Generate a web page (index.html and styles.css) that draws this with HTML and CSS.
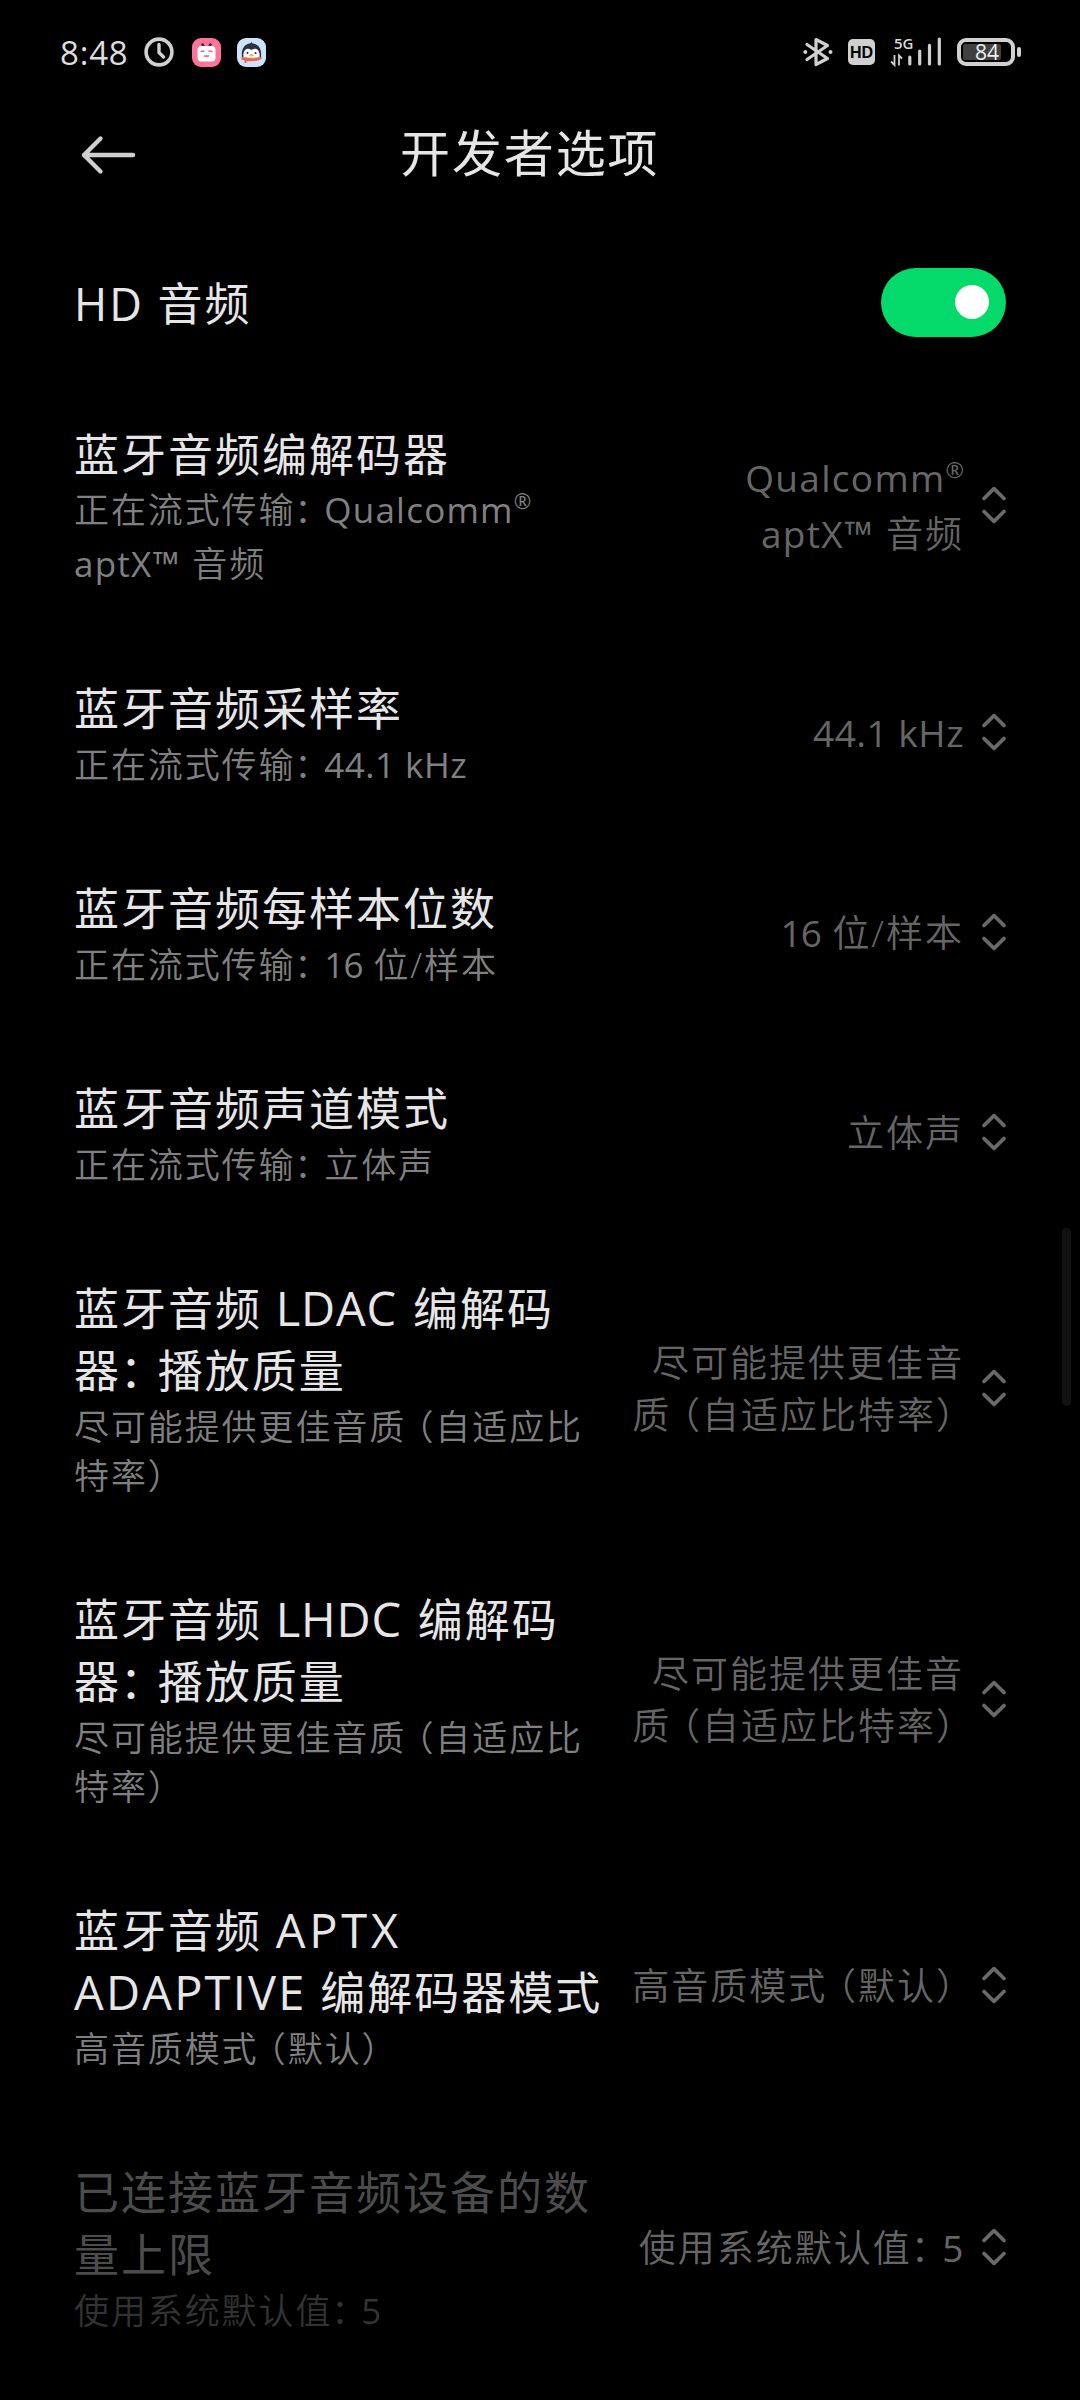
FILE: index.html
```html
<!DOCTYPE html>
<html lang="zh-CN">
<head>
  <meta charset="UTF-8" />
  <meta name="viewport" content="width=device-width, initial-scale=1.0"/>
  <title>开发者选项</title>

  <link rel="stylesheet" href="styles.css">
</head>
<body>

  <svg width="0" height="0" class="defs">
    <symbol id="updown" viewBox="0 0 24 38">
      <path d="M2 12.5 L12 2.6 L22 12.5 M2 25.5 L12 35.4 L22 25.5" fill="none" stroke="#6a6a6a" stroke-width="3.6" stroke-linecap="round" stroke-linejoin="round"/>
    </symbol>
  </svg>

  <!-- Statusleiste -->
  <div class="status-bar">
    <div class="status-left">
      <span class="time">8:48</span>
      <svg class="clock" width="30" height="30" viewBox="0 0 30 30">
        <circle cx="15" cy="15" r="12.9" fill="none" stroke="#d0d0d0" stroke-width="3.6"/>
        <path d="M15 7.5 V15.5 L19.5 20" fill="none" stroke="#d0d0d0" stroke-width="3.4" stroke-linecap="round"/>
      </svg>
      <svg class="app" width="29" height="29" viewBox="0 0 29 29">
        <rect width="29" height="29" rx="9" fill="#ff7299"/>
        <path d="M10 5.5 L12 9 M19 5.5 L17 9" stroke="#3a2430" stroke-width="2.4"/>
        <rect x="5.5" y="8" width="18" height="15.5" rx="4" fill="#fff"/>
        <path d="M8.5 13.5 L12.5 13 M16.5 13 L20.5 13.5 M12 17.5 Q13.3 19 14.5 17.5 Q15.7 19 17 17.5" fill="none" stroke="#e8668c" stroke-width="1.3"/>
      </svg>
      <svg class="app" width="29" height="29" viewBox="0 0 29 29">
        <rect width="29" height="29" rx="9" fill="#cbe4fd"/>
        <path d="M5 19 C4 10 8 6 13 5.5 L14.5 4 L15.5 5.5 C21 6 25 10 24 19 Z" fill="#2b3140"/>
        <path d="M6.5 19 C5.5 12 10 8.5 14.5 12 C19 8.5 23.5 12 22.5 19 Z" fill="#fff"/>
        <circle cx="10.5" cy="15" r="1" fill="#2b3140"/>
        <circle cx="18.5" cy="15" r="1" fill="#2b3140"/>
        <ellipse cx="14.5" cy="17.3" rx="2.3" ry="1.2" fill="#f5b53d"/>
        <path d="M4.5 18.5 Q14.5 22 24.5 18.5 V21 Q19 24 9.5 23 V25 H7.5 V22.5 L4.5 21.5 Z" fill="#f0644f"/>
      </svg>
    </div>

    <div class="status-right">
      <svg width="30" height="30" viewBox="0 0 30 30">
        <path d="M4 7.5 L24.5 21.5 L13 27.5 V2.5 L24.5 8.5 L4 22.5" fill="none" stroke="#d0d0d0" stroke-width="3.2" stroke-linejoin="round" stroke-linecap="round"/>
        <circle cx="2.3" cy="15" r="2" fill="#d0d0d0"/>
        <circle cx="27.5" cy="15" r="2" fill="#d0d0d0"/>
      </svg>
      <div class="hd">HD</div>
      <svg class="signal" width="52" height="30" viewBox="0 0 52 30">
        <text x="4" y="11.5" class="net">5G</text>
        <path d="M4.5 18 V28 L1 24.5 M9 28.5 V18.5 L12 21.5" fill="none" stroke="#d0d0d0" stroke-width="1.8"/>
        <path d="M19.8 20 V27 M29.7 14 V27 M39.5 8.3 V27 M49.3 2.2 V27" stroke="#d0d0d0" stroke-width="3.2" stroke-linecap="round"/>
      </svg>
      <div class="battery"><div class="level"></div><span>84</span></div>
      <div class="nub"></div>
    </div>
  </div>

  <!-- Titel -->
  <header class="header">
    <svg class="back" width="56" height="40" viewBox="0 0 56 40">
      <path d="M53 20 H4 M20.5 3.5 L4 20 L20.5 36.5" fill="none" stroke="#cfcfcf" stroke-width="4.4" stroke-linecap="round" stroke-linejoin="round"/>
    </svg>
    <h1>开发者选项</h1>
  </header>

  <!-- Einstellungen -->
  <main class="list">
    <div class="row row-switch">
      <div class="title">HD 音频</div>
      <div class="switch"><div class="knob"></div></div>
    </div>

    <div class="row tall">
      <div class="text">
        <div class="title">蓝牙音频编解码器</div>
        <div class="summary">正在流式传输<span class="colon">：</span><span class="latin">Qualcomm</span><span class="reg">®</span><br><span class="latin">aptX</span><span class="tm">™</span> 音频</div>
      </div>
      <div class="value"><span class="latin">Qualcomm</span><span class="reg">®</span><br><span class="latin">aptX</span><span class="tm">™</span> 音频</div>
      <svg class="arrows"><use href="#updown"/></svg>
    </div>

    <div class="row">
      <div class="text">
        <div class="title">蓝牙音频采样率</div>
        <div class="summary">正在流式传输<span class="colon">：</span><span class="rate">44.1 kHz</span></div>
      </div>
      <div class="value"><span class="rate">44.1 kHz</span></div>
      <svg class="arrows"><use href="#updown"/></svg>
    </div>

    <div class="row">
      <div class="text">
        <div class="title">蓝牙音频每样本位数</div>
        <div class="summary">正在流式传输<span class="colon">：</span><span class="bits">16 </span>位/样本</div>
      </div>
      <div class="value"><span class="bits">16 </span>位/样本</div>
      <svg class="arrows"><use href="#updown"/></svg>
    </div>

    <div class="row">
      <div class="text">
        <div class="title">蓝牙音频声道模式</div>
        <div class="summary">正在流式传输<span class="colon">：</span>立体声</div>
      </div>
      <div class="value">立体声</div>
      <svg class="arrows"><use href="#updown"/></svg>
    </div>

    <div class="row">
      <div class="text">
        <div class="title">蓝牙音频 <span class="codec">LDAC </span>编解码<br>器<span class="colon">：</span>播放质量</div>
        <div class="summary">尽可能提供更佳音质<span class="open">（</span>自适应比<br>特率<span class="close">）</span></div>
      </div>
      <div class="value">尽可能提供更佳音<br>质<span class="open">（</span>自适应比特率<span class="close">）</span></div>
      <svg class="arrows"><use href="#updown"/></svg>
    </div>

    <div class="row">
      <div class="text">
        <div class="title">蓝牙音频 <span class="codec">LHDC </span>编解码<br>器<span class="colon">：</span>播放质量</div>
        <div class="summary">尽可能提供更佳音质<span class="open">（</span>自适应比<br>特率<span class="close">）</span></div>
      </div>
      <div class="value">尽可能提供更佳音<br>质<span class="open">（</span>自适应比特率<span class="close">）</span></div>
      <svg class="arrows"><use href="#updown"/></svg>
    </div>

    <div class="row">
      <div class="text">
        <div class="title">蓝牙音频 <span class="codec aptx">APTX</span><br><span class="codec adaptive">ADAPTIVE</span> 编解码器模式</div>
        <div class="summary">高音质模式<span class="open">（</span>默认<span class="close">）</span></div>
      </div>
      <div class="value">高音质模式<span class="open">（</span>默认<span class="close">）</span></div>
      <svg class="arrows"><use href="#updown"/></svg>
    </div>

    <div class="row disabled">
      <div class="text">
        <div class="title">已连接蓝牙音频设备的数<br>量上限</div>
        <div class="summary">使用系统默认值<span class="colon">：</span><span class="rate">5</span></div>
      </div>
      <div class="value">使用系统默认值<span class="colon">：</span><span class="rate">5</span></div>
      <svg class="arrows"><use href="#updown"/></svg>
    </div>
  </main>

  <div class="scrollbar"></div>

</body>
</html>
```
FILE: styles.css
```css
* {
  margin: 0;
  padding: 0;
  box-sizing: border-box;
}

body {
  width: 1080px;
  height: 2400px;
  background: #000;
  color: #e6e6e6;
  font-family: "Open Sans", "Noto Sans CJK SC", sans-serif;
  text-spacing-trim: space-all;
  white-space: nowrap;
  overflow: hidden;
}

.defs {
  display: block;
}

/* Statusleiste */
.status-bar {
  height: 104px;
  padding: 0 59px 0 60px;
  display: flex;
  justify-content: space-between;
}

.status-left,
.status-right {
  display: flex;
  align-items: center;
  height: 104px;
}

.time {
  font-size: 33px;
  letter-spacing: 0.8px;
  color: #dedede;
}

.clock {
  margin-left: 16px;
}

.app {
  margin-left: 18px;
}

.app + .app {
  margin-left: 16px;
}

.hd {
  width: 27px;
  height: 26px;
  margin-left: 15px;
  border-radius: 5px;
  background: #d0d0d0;
  color: #000;
  font-family: "Liberation Sans", sans-serif;
  font-size: 16px;
  font-weight: bold;
  line-height: 27px;
  text-align: center;
}

.signal {
  margin-left: 15px;
  overflow: visible;
}

.net {
  font-size: 15px;
  font-weight: 600;
  fill: #d8d8d8;
}

.battery {
  position: relative;
  width: 58px;
  height: 28px;
  margin-left: 15px;
  border: 4px solid #d0d0d0;
  border-radius: 9px;
  padding: 2px;
}

.level {
  width: 38px;
  height: 16px;
  border-radius: 2px;
  background: #404040;
}

.battery span {
  position: absolute;
  top: -1px;
  left: 14px;
  font-size: 21px;
  line-height: 22px;
  color: #eee;
}

.nub {
  width: 4px;
  height: 10px;
  margin-left: 2px;
  border-radius: 2px;
  background: #d0d0d0;
}

/* Titel */
.header {
  height: 124px;
  padding: 0 80px;
  display: flex;
  align-items: flex-start;
}

.back {
  margin-top: 31px;
}

.header h1 {
  margin-left: 264px;
  font-size: 50px;
  font-weight: 400;
  letter-spacing: 1.9px;
  line-height: 98px;
}

/* Liste */
.row {
  display: flex;
  align-items: center;
  padding: 45.5px 74px 43.5px 74px;
}

.row-switch {
  height: 150px;
  justify-content: space-between;
}

.title {
  font-size: 45px;
  line-height: 62px;
  letter-spacing: 2px;
}

.summary {
  font-size: 35px;
  font-weight: 350;
  line-height: 49px;
  letter-spacing: 1.9px;
  color: #808080;
}

.value {
  margin-left: auto;
  font-size: 37px;
  font-weight: 350;
  line-height: 52px;
  letter-spacing: 2px;
  text-align: right;
  color: #666;
}

.tall .summary {
  line-height: 54px;
  margin: -2.5px 0;
}

.tall .value {
  line-height: 56px;
}

.disabled .title {
  color: #4c4c4c;
}

.disabled .summary {
  color: #333;
}

/* schmalere Satzzeichen */
.colon {
  margin-left: -0.03em;
  margin-right: -0.2em;
}

.open {
  margin-left: -0.22em;
}

.close {
  margin-right: -0.3em;
}

/* lateinische Zeichen */
.latin,
.rate,
.bits {
  font-weight: 400;
}

.latin {
  letter-spacing: 0.035em;
}

.rate {
  letter-spacing: 0.014em;
}

.bits {
  letter-spacing: -0.02em;
  word-spacing: 0.06em;
}

.codec {
  font-size: 47px;
  line-height: 1;
  letter-spacing: 0.8px;
  word-spacing: 3px;
}

.aptx {
  letter-spacing: 3.8px;
}

.adaptive {
  letter-spacing: 2.2px;
}

.reg {
  font-size: 0.6em;
  font-weight: 500;
  line-height: 0;
  vertical-align: 0.65em;
  letter-spacing: 0;
}

.tm {
  font-weight: 600;
}

.arrows {
  width: 24px;
  height: 38px;
  margin-left: 18px;
  margin-top: -2px;
}

.switch {
  width: 125px;
  height: 69px;
  margin-top: -3px;
  padding: 17px;
  border-radius: 35px;
  background: #04da6a;
}

.knob {
  width: 34px;
  height: 34px;
  margin-left: auto;
  border-radius: 50%;
  background: #fff;
}

.scrollbar {
  position: absolute;
  top: 1228px;
  left: 1062px;
  width: 9px;
  height: 178px;
  border-radius: 5px;
  background: #121212;
}
```
